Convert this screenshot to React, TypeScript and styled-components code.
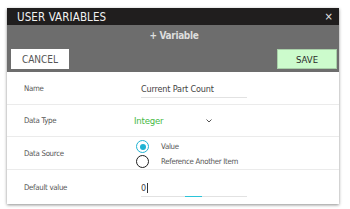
import React from "react";
import styled, { createGlobalStyle } from "styled-components";

const Global = createGlobalStyle`
  html, body { margin: 0; padding: 0; background: #ffffff; }
  body { font-family: "DejaVu Sans Condensed", "Liberation Sans", sans-serif; }
`;

const Page = styled.div`
  width: 350px;
  height: 209px;
  padding: 8px 0 0 7px;
  box-sizing: border-box;
  overflow: hidden;
`;

const Dialog = styled.div`
  width: 332px;
  background: #fff;
  box-shadow: 0 1px 3px rgba(0, 0, 0, 0.45);
  display: flex;
  flex-direction: column;
`;

const TitleBar = styled.div`
  height: 17px;
  background: #201e1e;
  display: flex;
  align-items: center;
  justify-content: space-between;
  padding: 0 6px 0 10px;
`;

const Title = styled.span`
  color: #f2f2f2;
  font-size: 11.5px;
  letter-spacing: 0.1px;
`;

const Close = styled.span`
  color: #e6e6e6;
  font-size: 10px;
  font-family: "DejaVu Sans", sans-serif;
  line-height: 1;
`;

const Toolbar = styled.div`
  height: 47px;
  background: #6d6d6d;
  display: flex;
  flex-direction: column;
  padding: 0 2px 3px 4px;
  box-sizing: border-box;
`;

const ToolTitle = styled.div`
  color: #dedede;
  font-size: 10px;
  font-weight: bold;
  letter-spacing: -0.35px;
  text-align: center;
  padding-top: 5px;
  height: 24px;
  box-sizing: border-box;
`;

const ButtonRow = styled.div`
  display: flex;
  justify-content: space-between;
`;

const Button = styled.div<{ $primary?: boolean }>`
  width: ${(p) => (p.$primary ? 60 : 58)}px;
  height: 20px;
  box-sizing: border-box;
  display: flex;
  align-items: center;
  justify-content: center;
  font-size: ${(p) => (p.$primary ? 9.5 : 10)}px;
  background: ${(p) => (p.$primary ? "#ccfbcc" : "#ffffff")};
  color: ${(p) => (p.$primary ? "#2a2a2a" : "#555555")};
  border: ${(p) => (p.$primary ? "1px solid #a8cfa8" : "none")};
`;

const Row = styled.div<{ $h: number }>`
  height: ${(p) => p.$h}px;
  display: grid;
  grid-template-columns: 134px 1fr;
  align-items: center;
  border-bottom: 1px solid #ebebeb;
  box-sizing: border-box;
  &:last-child { border-bottom: none; }
`;

const Label = styled.div`
  padding-left: 17px;
  font-size: 7.8px;
  letter-spacing: -0.3px;
  color: #555;
`;

const Input = styled.div`
  position: relative;
  width: 106px;
  height: 15px;
  border-bottom: 1px solid #e2e2e2;
  font-size: 9px;
  letter-spacing: -0.15px;
  color: #444;
  display: flex;
  align-items: center;
  margin-top: 3px;
`;

const Caret = styled.span`
  display: inline-block;
  width: 1px;
  height: 10px;
  background: #333;
  margin-left: 1px;
`;

const FocusLine = styled.span`
  position: absolute;
  bottom: -1px;
  left: 44px;
  width: 17px;
  height: 1px;
  background: #2bc4d9;
`;

const Select = styled.div`
  display: flex;
  align-items: center;
  margin-left: -7px;
  width: 78px;
  justify-content: space-between;
  font-size: 9.5px;
  letter-spacing: -0.2px;
  color: #45b945;
`;

const Radios = styled.div`
  display: flex;
  flex-direction: column;
  gap: 2px;
  margin-left: -5px;
  padding-top: 2px;
`;

const RadioRow = styled.div`
  display: flex;
  align-items: center;
  gap: 12px;
  font-size: 7.8px;
  letter-spacing: -0.3px;
  color: #555;
`;

const Radio = styled.span<{ $on?: boolean }>`
  width: 13px;
  height: 13px;
  box-sizing: border-box;
  border-radius: 50%;
  border: 1.5px solid ${(p) => (p.$on ? "#1fb3d3" : "#1e1e1e")};
  display: flex;
  align-items: center;
  justify-content: center;
  &::after {
    content: "";
    display: ${(p) => (p.$on ? "block" : "none")};
    width: 6px;
    height: 6px;
    border-radius: 50%;
    background: #1fb3d3;
  }
`;

export default function App() {
  return (
    <>
      <Global />
      <Page>
        <Dialog>
          <TitleBar>
            <Title>USER VARIABLES</Title>
            <Close>×</Close>
          </TitleBar>
          <Toolbar>
            <ToolTitle>+ Variable</ToolTitle>
            <ButtonRow>
              <Button>CANCEL</Button>
              <Button $primary>SAVE</Button>
            </ButtonRow>
          </Toolbar>
          <Row $h={33}>
            <Label>Name</Label>
            <Input>Current Part Count</Input>
          </Row>
          <Row $h={32}>
            <Label>Data Type</Label>
            <Select>
              <span>Integer</span>
              <svg width="6" height="4" viewBox="0 0 6 4">
                <path d="M0.5 0.5 L3 3 L5.5 0.5" fill="none" stroke="#555" strokeWidth="1" />
              </svg>
            </Select>
          </Row>
          <Row $h={33}>
            <Label>Data Source</Label>
            <Radios>
              <RadioRow>
                <Radio $on />
                <span>Value</span>
              </RadioRow>
              <RadioRow>
                <Radio />
                <span>Reference Another Item</span>
              </RadioRow>
            </Radios>
          </Row>
          <Row $h={34}>
            <Label>Default value</Label>
            <Input>
              0<Caret />
              <FocusLine />
            </Input>
          </Row>
        </Dialog>
      </Page>
    </>
  );
}
